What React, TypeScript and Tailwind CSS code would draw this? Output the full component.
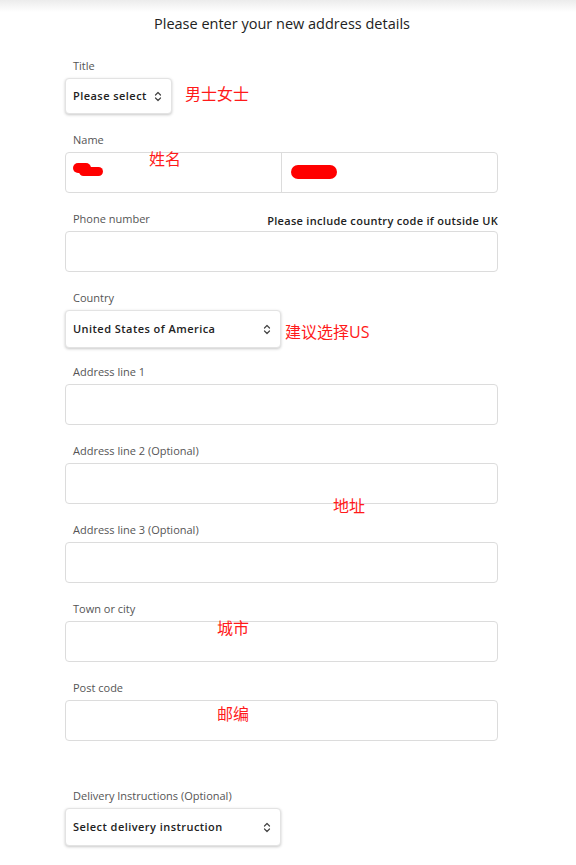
import React from 'react';

const font = { fontFamily: '"Open Sans", "Noto Sans CJK SC", sans-serif' };

function Chevron() {
  return (
    <svg width="8" height="11" viewBox="0 0 8 11" fill="none" stroke="#444" strokeWidth="1.2" strokeLinecap="round" strokeLinejoin="round">
      <path d="M1.5 4 L4 1.5 L6.5 4" />
      <path d="M1.5 7 L4 9.5 L6.5 7" />
    </svg>
  );
}

function Label({ children }: { children: React.ReactNode }) {
  return <div className="pl-2 text-[11px] leading-4 text-[#555] mb-1">{children}</div>;
}

function Select({ value, width }: { value: string; width: string }) {
  return (
    <div className={`${width} flex items-center justify-between rounded border border-[#e3e3e3] bg-white pl-[7px] pr-[9px] shadow-[0_1px_3px_rgba(0,0,0,0.22)]`}>
      <span className="text-[11px] font-semibold text-[#222] tracking-[0.45px]">{value}</span>
      <Chevron />
    </div>
  );
}

function Input() {
  return <div className="h-[41px] w-full rounded border border-[#dcdcdc] bg-white" />;
}

function Note({ children, className }: { children: React.ReactNode; className: string }) {
  return <span className={`absolute text-[16px] leading-none text-[#ff1a1a] ${className}`}>{children}</span>;
}

export default function App() {
  return (
    <div className="relative min-h-[865px] w-[576px] bg-white" style={font}>
      <div className="h-[12px] bg-gradient-to-b from-[#ececec] to-white" />
      <h1 className="mt-[2px] pr-3 text-center text-[14.5px] leading-5 text-[#222]">Please enter your new address details</h1>

      <div className="mx-[65px] mt-[24px] w-[433px]">
        <div className="relative mb-[18px]">
          <Label>Title</Label>
          <Select value="Please select" width="w-[107px] h-[36px]" />
          <Note className="left-[120px] top-[28px]">男士女士</Note>
        </div>

        <div className="relative mb-[18px]">
          <Label>Name</Label>
          <div className="flex h-[41px] rounded border border-[#dcdcdc]">
            <div className="relative flex-1 border-r border-[#dcdcdc]">
              <span className="absolute left-[7px] top-[10px] h-[10px] w-[18px] rounded-full bg-[#ff0000]" />
              <span className="absolute left-[13px] top-[14px] h-[9px] w-[24px] rounded-full bg-[#ff0000]" />
            </div>
            <div className="relative flex-1">
              <span className="absolute left-[9px] top-[12px] h-[14px] w-[46px] rounded-full bg-[#ff0000]" />
            </div>
          </div>
          <Note className="left-[84px] top-[19px]">姓名</Note>
        </div>

        <div className="relative mb-[18px]">
          <div className="flex items-end justify-between">
            <Label>Phone number</Label>
            <span className="mb-[2px] text-[11px] font-semibold leading-4 tracking-[0.3px] text-[#222]">Please include country code if outside UK</span>
          </div>
          <Input />
        </div>

        <div className="relative mb-[16px]">
          <Label>Country</Label>
          <Select value="United States of America" width="w-[216px] h-[38px]" />
          <Note className="left-[220px] top-[34px]">建议选择US</Note>
        </div>

        <div className="mb-[18px]">
          <Label>Address line 1</Label>
          <Input />
        </div>

        <div className="relative mb-[18px]">
          <Label>Address line 2 (Optional)</Label>
          <Input />
          <Note className="left-[268px] top-[55px]">地址</Note>
        </div>

        <div className="mb-[18px]">
          <Label>Address line 3 (Optional)</Label>
          <Input />
        </div>

        <div className="relative mb-[18px]">
          <Label>Town or city</Label>
          <Input />
          <Note className="left-[152px] top-[19px]">城市</Note>
        </div>

        <div className="relative mb-[47px]">
          <Label>Post code</Label>
          <Input />
          <Note className="left-[152px] top-[26px]">邮编</Note>
        </div>

        <div>
          <Label>Delivery Instructions (Optional)</Label>
          <Select value="Select delivery instruction" width="w-[216px] h-[38px]" />
        </div>
      </div>
    </div>
  );
}
